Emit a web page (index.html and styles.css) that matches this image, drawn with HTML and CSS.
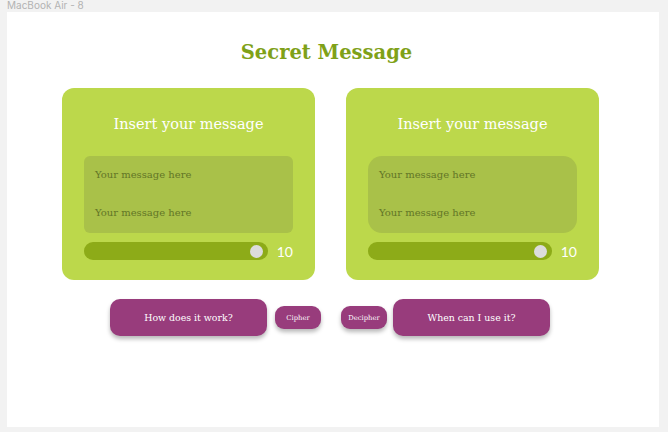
FILE: index.html
```html
<!DOCTYPE html>
<html>
<head>
<meta charset="utf-8">
<link rel="stylesheet" href="styles.css">
</head>
<body>
<div class="frame-label">MacBook Air - 8</div>
<main class="frame">
  <h1 class="title">Secret Message</h1>
  <section class="cards">
    <div class="card">
      <h2 class="card-title">Insert your message</h2>
      <div class="textbox">
        <p class="placeholder">Your message here</p>
        <p class="placeholder">Your message here</p>
      </div>
      <div class="slider-row">
        <div class="slider"><span class="knob"></span></div>
        <span class="value">10</span>
      </div>
    </div>
    <div class="card">
      <h2 class="card-title">Insert your message</h2>
      <div class="textbox round">
        <p class="placeholder">Your message here</p>
        <p class="placeholder">Your message here</p>
      </div>
      <div class="slider-row">
        <div class="slider"><span class="knob"></span></div>
        <span class="value">10</span>
      </div>
    </div>
  </section>
  <section class="actions">
    <button class="btn big">How does it work?</button>
    <button class="btn small cipher">Cipher</button>
    <button class="btn small decipher">Decipher</button>
    <button class="btn big when">When can I use it?</button>
  </section>
</main>
</body>
</html>
```
FILE: styles.css
```css
* { box-sizing: border-box; }
html, body { margin: 0; padding: 0; }
body {
  background: #f2f2f2;
  width: 668px;
  height: 432px;
  overflow: hidden;
  font-family: "Liberation Serif", serif;
}
.frame-label {
  position: absolute;
  left: 7px;
  top: 0;
  font-family: "Inter", "Liberation Sans", sans-serif;
  font-size: 10px;
  color: #b3b3b3;
  line-height: 11px;
}
.frame {
  margin: 12px 0 0 7px;
  width: 652px;
  height: 415px;
  background: #ffffff;
  padding-top: 27px;
}
.title {
  margin: 0;
  text-align: center;
  font-family: "DejaVu Serif", serif;
  font-weight: bold;
  font-size: 19.5px;
  line-height: 28px;
  color: #7fa118;
  padding-right: 13px;
}
.cards {
  display: flex;
  gap: 31px;
  padding-left: 55px;
  margin-top: 21px;
}
.card {
  width: 253px;
  height: 192px;
  background: #bcd84b;
  border-radius: 12px;
  padding: 22px 22px 0 22px;
}
.card-title {
  margin: 0;
  text-align: center;
  font-weight: normal;
  font-family: "DejaVu Serif", serif;
  font-size: 14.5px;
  line-height: 28px;
  color: #ffffff;
  height: 46px;
}
.textbox {
  height: 77px;
  background: #a9c149;
  border-radius: 6px;
  padding: 10px 11px;
  display: flex;
  flex-direction: column;
  gap: 20px;
}
.textbox.round { border-radius: 14px; }
.placeholder {
  margin: 0;
  font-family: "DejaVu Serif", serif;
  font-size: 10px;
  line-height: 18px;
  color: #637627;
}
.slider-row {
  display: flex;
  align-items: center;
  margin-top: 9px;
}
.slider {
  width: 184px;
  height: 18px;
  border-radius: 9px;
  background: #8dab18;
  display: flex;
  align-items: center;
  justify-content: flex-end;
  padding-right: 5px;
}
.knob {
  width: 13px;
  height: 13px;
  border-radius: 50%;
  background: #dcdcdc;
}
.value {
  margin-left: 9px;
  font-family: "Lato", sans-serif;
  font-size: 14px;
  color: #ffffff;
}
.actions {
  display: flex;
  align-items: center;
  margin-top: 19px;
  padding-left: 103px;
}
.btn {
  border: none;
  background: #983c7c;
  color: #ffffff;
  font-family: "DejaVu Serif", serif;
  box-shadow: 0 3px 4px rgba(0,0,0,0.28);
  padding: 0;
}
.btn.big {
  width: 157px;
  height: 37px;
  border-radius: 10px;
  font-size: 9.4px;
}
.btn.small {
  width: 46px;
  height: 23px;
  border-radius: 9px;
  font-size: 6.8px;
}
.cipher { margin-left: 8px; }
.decipher { margin-left: 20px; }
.when { margin-left: 6px; }
```
